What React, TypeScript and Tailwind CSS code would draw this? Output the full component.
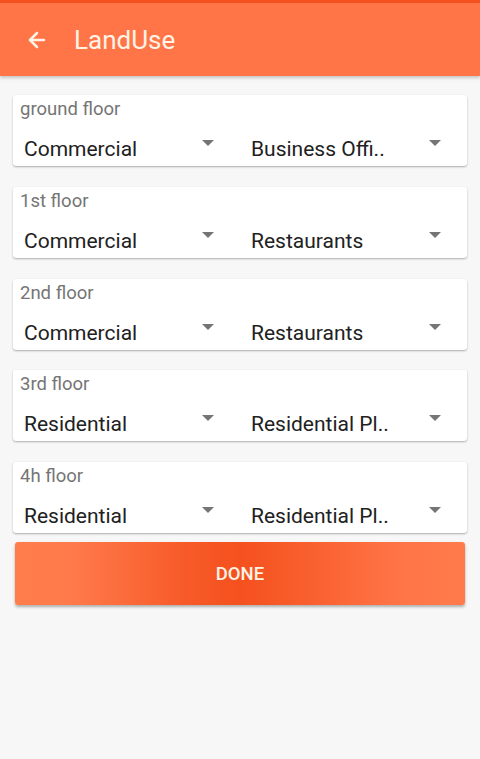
import { ArrowLeft } from "lucide-react";

const FLOORS = [
  { label: "ground floor", use: "Commercial", sub: "Business Offi.." },
  { label: "1st floor", use: "Commercial", sub: "Restaurants" },
  { label: "2nd floor", use: "Commercial", sub: "Restaurants" },
  { label: "3rd floor", use: "Residential", sub: "Residential Pl.." },
  { label: "4h floor", use: "Residential", sub: "Residential Pl.." },
];

function Spinner({ value }: { value: string }) {
  return (
    <div className="relative flex h-[34px] items-center pl-[11px] pr-[40px]">
      <span className="whitespace-nowrap text-[21px] leading-[28px] text-[#212121]">{value}</span>
      <span className="absolute right-[26px] top-[8px] h-0 w-0 border-x-[6px] border-t-[6px] border-x-transparent border-t-[#757575]" />
    </div>
  );
}

export default function App() {
  return (
    <div className="flex h-[759px] w-[480px] flex-col bg-[#f7f7f7] font-['Roboto',sans-serif]">
      {/* Toolbar */}
      <div className="h-[3px] bg-[#f4511e]" />
      <div className="flex h-[73px] items-center bg-[#ff7547] shadow-[0_2px_3px_rgba(0,0,0,0.2)]">
        <ArrowLeft className="ml-[25px] h-[24px] w-[24px] text-[#fff3e6]" strokeWidth={2.5} />
        <span className="ml-[25px] mt-[2px] text-[26px] text-[#fff3e6]">LandUse</span>
      </div>

      <div className="flex flex-col gap-[20.75px] px-[13px] pt-[19px]">
        {FLOORS.map((f) => (
          <div
            key={f.label}
            className="h-[71px] rounded-[3px] bg-white shadow-[0_1px_2px_rgba(0,0,0,0.3)]"
          >
            <div className="px-[7px] pt-[3px] text-[18.5px] leading-[22px] text-[#757575]">{f.label}</div>
            <div className="mt-[12px] grid grid-cols-2">
              <Spinner value={f.use} />
              <Spinner value={f.sub} />
            </div>
          </div>
        ))}
      </div>

      <div className="px-[15px] pt-[9px]">
        <button className="flex h-[63px] w-full items-center justify-center rounded-[3px] bg-[linear-gradient(90deg,#ff7c4d_0%,#ff7b4c_12%,#f75a28_38%,#f4511e_50%,#fa6231_68%,#ff7548_86%,#ff7b4c_100%)] pt-[3px] text-[18.5px] font-medium text-[#fff3e6] shadow-[0_2px_3px_rgba(0,0,0,0.3)]">
          DONE
        </button>
      </div>
    </div>
  );
}
